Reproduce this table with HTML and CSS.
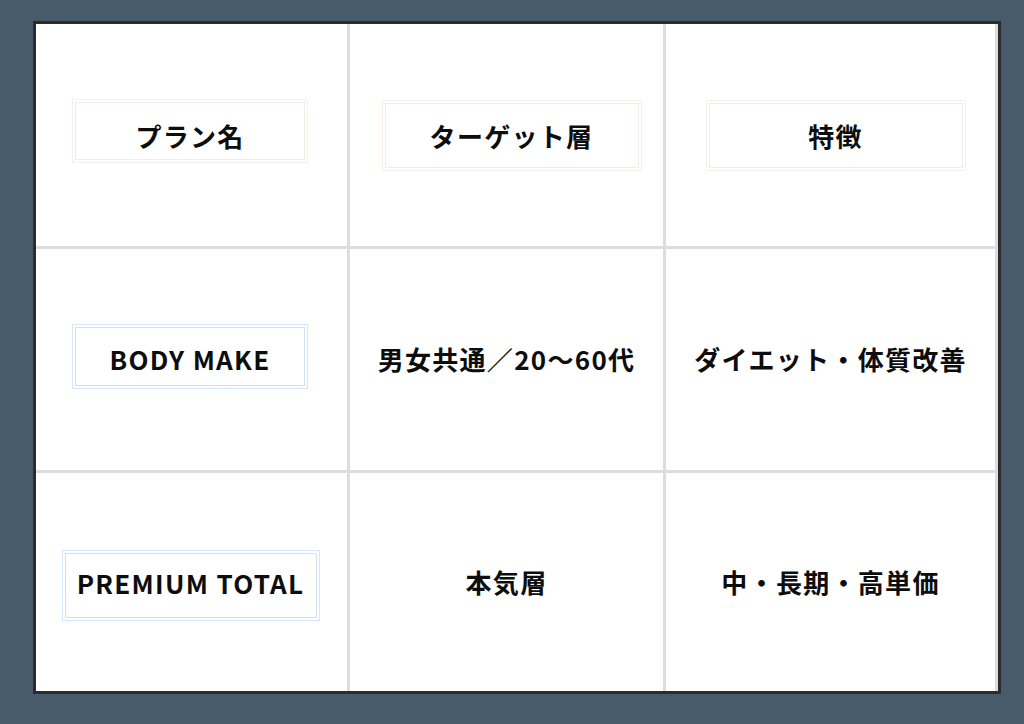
FILE: index.html
```html
<!DOCTYPE html>
<html lang="ja">
<head>
<meta charset="utf-8">
<title>プラン比較</title>
<link rel="stylesheet" href="styles.css">
</head>
<body>
<div class="card">
  <div class="grid">
    <div class="cell"><div class="label label-head box-name">プラン名</div></div>
    <div class="cell"><div class="label label-head box-wide shift-r">ターゲット層</div></div>
    <div class="cell"><div class="label label-head box-wide shift-r">特徴</div></div>

    <div class="cell"><div class="label label-plan box-body">BODY MAKE</div></div>
    <div class="cell"><span class="text">男女共通／20～60代</span></div>
    <div class="cell"><span class="text">ダイエット・体質改善</span></div>

    <div class="cell"><div class="label label-plan box-premium">PREMIUM TOTAL</div></div>
    <div class="cell"><span class="text">本気層</span></div>
    <div class="cell"><span class="text">中・長期・高単価</span></div>
  </div>
</div>
</body>
</html>
```

FILE: styles.css
```css
* { box-sizing: border-box; }

html, body {
  margin: 0;
  padding: 0;
}

body {
  width: 1024px;
  height: 724px;
  background: #475b6b;
  font-family: "Noto Sans CJK JP", "Noto Sans", sans-serif;
  color: #0d0d0d;
  overflow: hidden;
}

.card {
  margin: 21px 0 0 33px;
  width: 968px;
  height: 673px;
  border: 3px solid #2c2c2c;
  background: #fff;
}

.grid {
  display: grid;
  grid-template-columns: 311px 313px 1fr;
  grid-template-rows: 222px 221px 1fr;
  gap: 3px;
  padding-right: 3px;
  height: 100%;
  background: #dddddd;
}

.cell {
  background: #fff;
  display: flex;
  align-items: center;
  justify-content: center;
}

.text,
.label {
  font-size: 26px;
  font-weight: 700;
  letter-spacing: 0.05em;
  line-height: 1.4;
  white-space: nowrap;
}

.label {
  display: flex;
  align-items: center;
  justify-content: center;
  padding-top: 3px;
  outline-width: 1px;
  outline-style: solid;
  outline-offset: 2px;
  border-width: 1px;
  border-style: solid;
}

.label-head {
  border-color: #f3ece0;
  outline-color: #f6f1e8;
}

.label-plan {
  border-color: #cfe1f8;
  outline-color: #d7e7fb;
}

.box-name { width: 230px; height: 58px; margin-bottom: 8px; margin-left: -3px; padding-top: 11px; }
.box-wide { width: 254px; height: 65px; }
.box-body { width: 230px; height: 59px; margin-bottom: 7px; margin-left: -3px; padding-top: 7px; }
.box-premium { width: 252px; height: 65px; margin-top: 6px; margin-left: -2px; padding-top: 0; padding-bottom: 3px; }

.shift-r { margin-left: 10px; }
```
